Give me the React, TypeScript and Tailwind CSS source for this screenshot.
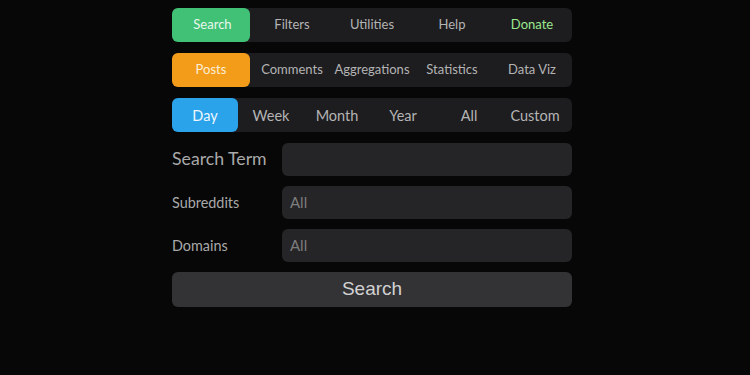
const mainTabs = ["Search", "Filters", "Utilities", "Help", "Donate"];
const typeTabs = ["Posts", "Comments", "Aggregations", "Statistics", "Data Viz"];
const timeTabs = ["Day", "Week", "Month", "Year", "All", "Custom"];

const App = () => {
  return (
    <div className="min-h-[375px] w-[750px] bg-[#070707] font-['Lato',sans-serif]">
      <div className="ml-[172px] flex w-[400px] flex-col pt-2">
        {/* Main tabs */}
        <div className="grid h-[34px] grid-cols-5 rounded-md bg-[#1d1c1f] text-[13px]">
          {mainTabs.map((t, i) => (
            <div
              key={t}
              className={
                i === 0
                  ? "flex w-[78px] items-center justify-center rounded-md bg-[#41c175] pb-[1px] pl-[3px] text-[#eaf7ee]"
                  : t === "Donate"
                    ? "flex items-center justify-center pb-[1px] text-[#9be88f]"
                    : "flex items-center justify-center pb-[1px] text-[#b4b4b4]"
              }
            >
              {t}
            </div>
          ))}
        </div>

        {/* Type tabs */}
        <div className="mt-[11px] grid h-[34px] grid-cols-5 rounded-md bg-[#1d1c1f] text-[13px]">
          {typeTabs.map((t, i) => (
            <div
              key={t}
              className={
                i === 0
                  ? "flex w-[78px] items-center justify-center rounded-md bg-[#f39c1a] pb-[1px] text-[#fbeed8]"
                  : "flex items-center justify-center pb-[1px] text-[#b4b4b4]"
              }
            >
              {t}
            </div>
          ))}
        </div>

        {/* Time tabs */}
        <div className="mt-[11px] grid h-[34px] grid-cols-6 rounded-md bg-[#1d1c1f] pr-1 text-[14.5px]">
          {timeTabs.map((t, i) => (
            <div
              key={t}
              className={
                i === 0
                  ? "flex items-center justify-center rounded-md bg-[#2ba3ea] pt-[1px] text-[#eef7fd]"
                  : "flex items-center justify-center pt-[1px] text-[#b4b4b4]"
              }
            >
              {t}
            </div>
          ))}
        </div>

        {/* Form */}
        <div className="mt-[11px] flex items-center">
          <label className="w-[110px] text-[17.7px] text-[#a9a9a9]">Search Term</label>
          <div className="h-[33px] flex-1 rounded-md bg-[#252427]"></div>
        </div>
        <div className="mt-[10px] flex items-center">
          <label className="w-[110px] text-[14.4px] text-[#a9a9a9]">Subreddits</label>
          <div className="flex h-[33px] flex-1 items-center rounded-md bg-[#252427] px-2 text-[15px] text-[#7d7d7d]">
            All
          </div>
        </div>
        <div className="mt-[10px] flex items-center">
          <label className="w-[110px] text-[14.4px] text-[#a9a9a9]">Domains</label>
          <div className="flex h-[33px] flex-1 items-center rounded-md bg-[#252427] px-2 text-[15px] text-[#7d7d7d]">
            All
          </div>
        </div>
        <button className="mt-[10px] flex h-[35px] items-center justify-center rounded-md bg-[#333335] font-['Liberation_Sans',sans-serif] text-[19px] text-[#d2d2d2]">
          Search
        </button>
      </div>
    </div>
  );
};

export default App;
